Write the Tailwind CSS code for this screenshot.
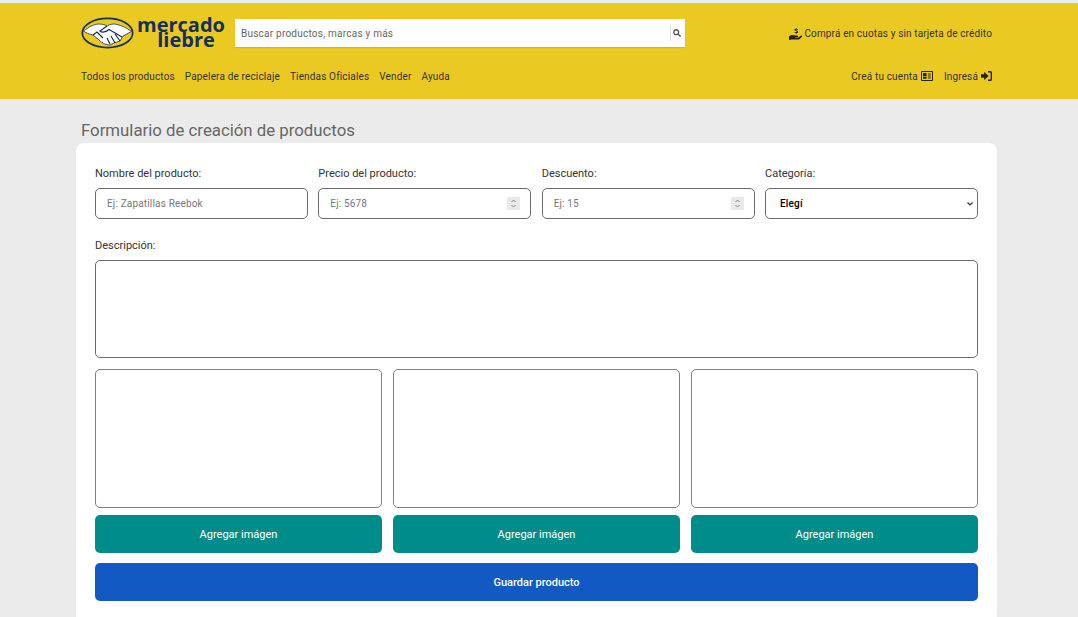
<!DOCTYPE html>
<html lang="es">
<head>
    <meta charset="UTF-8">
    <meta name="viewport" content="width=device-width, initial-scale=1.0">
    <title>Formulario de creación de productos</title>
    <script src="https://cdn.jsdelivr.net/npm/@tailwindcss/browser@4"></script>
</head>
<body class="h-[617px] overflow-hidden bg-[#ebebeb] pt-[3px] font-['Roboto',sans-serif] text-[#333]">
    <!-- Header -->
    <header class="h-[96px] bg-[#ebc923] pl-[81px] pr-[86px] text-[#333]">
        <div class="flex h-[60px] items-center">
            <div class="flex w-[154px] items-center">
                <svg class="h-[32px] w-[53px] shrink-0" viewBox="0 0 53 32">
                    <ellipse cx="26.5" cy="16" rx="25.2" ry="14.6" fill="#ebc923" stroke="#14305c" stroke-width="1.7"/>
                    <path d="M2.5 14 C8 10 13 7 18 7 C22 7 24 8 26 9 C29 7 33 6.5 36 7.5 C41 8.5 46 11 50.5 14.5 L42 19 L39 24 L33 26 L29 28 C24 28 20 25 17 22 L12 18 C8 17 5 16 2.5 14 Z" fill="#fff" stroke="#14305c" stroke-width="0.8"/>
                    <path d="M26 9 L19 14 C21 16 25 15 28 12.5 L41 20 M34 17 L39 24 M30 19 L34 26 M26 21 L29 27 M12 18 L16 15 L22 21" fill="none" stroke="#14305c" stroke-width="1.2"/>
                </svg>
                <div class="ml-[3px] w-[86px] pb-[2px] text-center font-['Open_Sans',sans-serif] text-[20px] leading-[15px] font-bold tracking-[0px] text-[#14305c]">
                    <div>mercado</div>
                    <div class="pl-[12px]">liebre</div>
                </div>
            </div>
            <div class="flex h-[28px] w-[450px] items-center bg-white pr-[4px] shadow-[0_1px_1px_rgba(0,0,0,0.1)]">
                <input type="text" placeholder="Buscar productos, marcas y más" class="h-full flex-1 bg-transparent pl-[6px] text-[10px] tracking-[0.23px] outline-none placeholder:text-[#666]">
                <div class="flex h-[16px] w-[11px] items-center justify-end border-l border-[#ddd]">
                    <svg class="h-[8px] w-[8px]" viewBox="0 0 10 10" fill="none" stroke="#555" stroke-width="1.7"><circle cx="4" cy="4" r="3"/><path d="M6.3 6.3 L9.5 9.5"/></svg>
                </div>
            </div>
            <div class="ml-auto flex items-center gap-[2px] pt-[1px] text-[10px] tracking-[0.14px]">
                <svg class="h-[12px] w-[13px]" viewBox="0 0 13 12" fill="#222"><path d="M0 8.4 C2 6.6 4.4 6.6 6.4 7.4 L8.4 7.4 C9.4 7.4 9.4 9 8.4 9 L6.4 9 L6.4 9.4 L9.6 9.4 L11.8 7.8 C12.8 7.2 13.6 8.2 12.8 9 L10 11.6 L2.8 11.6 L0 12 Z"/><path d="M6.8 0 H7.6 V.8 C8.4 .9 8.9 1.3 9 2 H8.1 C7.9 1.5 6.6 1.5 6.6 2.1 C6.6 2.8 9.1 2.4 9.1 3.9 C9.1 4.6 8.5 5 7.6 5.1 V6 H6.8 V5.1 C5.9 5 5.4 4.6 5.3 3.9 H6.2 C6.4 4.4 7.9 4.4 7.9 3.8 C7.9 3.1 5.4 3.5 5.4 2.1 C5.4 1.4 6 .9 6.8 .8 Z"/></svg>
                <span>Comprá en cuotas y sin tarjeta de crédito</span>
            </div>
        </div>
        <nav class="flex h-[26px] items-center text-[10px] tracking-[0.15px]">
            <a href="#" class="mr-[10px]">Todos los productos</a>
            <a href="#" class="mr-[10px]">Papelera de reciclaje</a>
            <a href="#" class="mr-[10px]">Tiendas Oficiales</a>
            <a href="#" class="mr-[10px]">Vender</a>
            <a href="#">Ayuda</a>
            <a href="#" class="ml-auto flex items-center gap-[3px]">Creá tu cuenta
                <svg class="h-[10px] w-[12px]" viewBox="0 0 12 10"><rect width="12" height="10" rx="1" fill="#222"/><rect x="1" y="1" width="10" height="8" fill="#ebc923"/><rect x="2" y="2" width="3.5" height="3" fill="#222"/><rect x="2" y="5.6" width="3.5" height="2.2" fill="#222"/><path d="M6.8 3h3M6.8 5h3M6.8 7h3" stroke="#222"/></svg>
            </a>
            <a href="#" class="ml-[11px] flex items-center gap-[3px]">Ingresá
                <svg class="h-[10px] w-[11px]" viewBox="0 0 11 10" fill="#222"><path d="M0 3.2 H3.2 V.8 L7.6 5 L3.2 9.2 V6.8 H0 Z"/><path d="M7 0 H9.2 C10.4 0 11 .7 11 1.8 V8.2 C11 9.3 10.4 10 9.2 10 H7 V8.6 H9 C9.4 8.6 9.6 8.4 9.6 8 V2 C9.6 1.6 9.4 1.4 9 1.4 H7 Z"/></svg>
            </a>
        </nav>
    </header>

    <!-- Main Content -->
    <main class="pl-[76px] pr-[81px]">
        <h1 class="flex h-[44px] items-end pb-[3px] pl-[5px] text-[16.8px] leading-[19px] text-[#666]">Formulario de creación de productos</h1>
        <form class="h-[500px] rounded-t-[8px] bg-white px-[19px] pt-[23px] text-[11px]">
            <div class="grid grid-cols-4 gap-x-[10.33px]">
                <div>
                    <label for="name" class="block h-[22px] text-[#333]">Nombre del producto:</label>
                    <input id="name" type="text" placeholder="Ej: Zapatillas Reebok" class="h-[31px] w-full rounded-[5px] border border-[#6b6b6b] px-[11px] text-[10px] tracking-[0.17px] outline-none placeholder:text-[#777]">
                </div>
                <div>
                    <label for="price" class="block h-[22px] text-[#333]">Precio del producto:</label>
                    <div class="relative">
                        <input id="price" type="number" placeholder="Ej: 5678" class="h-[31px] w-full rounded-[5px] border border-[#6b6b6b] px-[11px] text-[10px] tracking-[0.17px] outline-none placeholder:text-[#777] [&::-webkit-inner-spin-button]:appearance-none">
                        <svg class="absolute top-[9px] right-[11px] h-[13px] w-[13px] bg-[#e9e9ed]" viewBox="0 0 13 13" fill="none" stroke="#8a8a8a"><path d="M4.5 5 L6.5 3 L8.5 5 M4.5 8 L6.5 10 L8.5 8"/></svg>
                    </div>
                </div>
                <div>
                    <label for="discount" class="block h-[22px] text-[#333]">Descuento:</label>
                    <div class="relative">
                        <input id="discount" type="number" placeholder="Ej: 15" class="h-[31px] w-full rounded-[5px] border border-[#6b6b6b] px-[11px] text-[10px] tracking-[0.17px] outline-none placeholder:text-[#777] [&::-webkit-inner-spin-button]:appearance-none">
                        <svg class="absolute top-[9px] right-[11px] h-[13px] w-[13px] bg-[#e9e9ed]" viewBox="0 0 13 13" fill="none" stroke="#8a8a8a"><path d="M4.5 5 L6.5 3 L8.5 5 M4.5 8 L6.5 10 L8.5 8"/></svg>
                    </div>
                </div>
                <div>
                    <label for="category" class="block h-[22px] text-[#333]">Categoría:</label>
                    <div class="relative">
                        <select id="category" class="h-[31px] w-full appearance-none rounded-[5px] border border-[#6b6b6b] bg-white pl-[14px] text-[10px] font-medium tracking-[0.17px] text-black outline-none">
                            <option>Elegí</option>
                        </select>
                        <svg class="absolute top-[14px] right-[5px] h-[4px] w-[6px]" viewBox="0 0 6 4" fill="none" stroke="#333" stroke-width="1.2"><path d="M.5 .5 L3 3 L5.5 .5"/></svg>
                    </div>
                </div>
            </div>
            <label for="description" class="mt-[19px] block h-[22px] text-[#333]">Descripción:</label>
            <textarea id="description" class="block h-[98px] w-full resize-none rounded-[5px] border border-[#6b6b6b] outline-none"></textarea>
            <div class="mt-[11px] grid grid-cols-3 gap-x-[11px]">
                <div class="h-[139px] rounded-[5px] border border-[#808080]"></div>
                <div class="h-[139px] rounded-[5px] border border-[#808080]"></div>
                <div class="h-[139px] rounded-[5px] border border-[#808080]"></div>
                <button type="button" class="mt-[7px] h-[38px] rounded-[5px] bg-[#008c88] pt-[2px] text-[11px] text-white">Agregar imágen</button>
                <button type="button" class="mt-[7px] h-[38px] rounded-[5px] bg-[#008c88] pt-[2px] text-[11px] text-white">Agregar imágen</button>
                <button type="button" class="mt-[7px] h-[38px] rounded-[5px] bg-[#008c88] pt-[2px] text-[11px] text-white">Agregar imágen</button>
            </div>
            <button type="submit" class="mt-[10px] h-[38px] w-full rounded-[5px] bg-[#1259c3] pt-[2px] text-[11px] font-medium text-white">Guardar producto</button>
        </form>
    </main>
</body>
</html>
